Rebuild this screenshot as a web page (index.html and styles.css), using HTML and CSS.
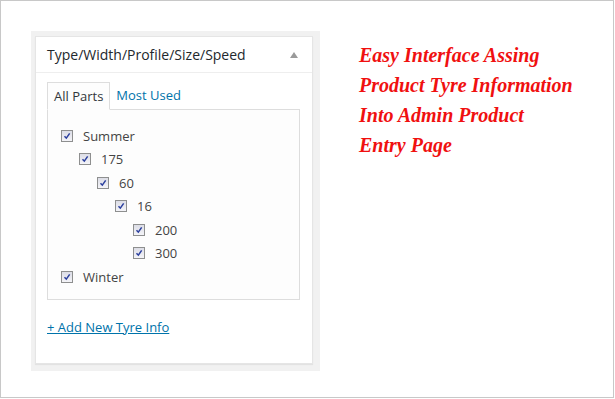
FILE: index.html
```html
<!DOCTYPE html>
<html>
<head>
<meta charset="utf-8">
<link rel="stylesheet" href="styles.css">
</head>
<body>
<div class="frame">
  <div class="well">
    <div class="postbox">
      <div class="hndle">
        <span class="title">Type/Width/Profile/Size/Speed</span>
        <span class="toggle"></span>
      </div>
      <div class="inside">
        <ul class="tabs">
          <li class="tab active">All Parts</li>
          <li class="tab">Most Used</li>
        </ul>
        <div class="panel">
          <ul class="tree">
            <li class="item l0"><span class="cb"><svg viewBox="0 0 12 12" width="12" height="12"><path d="M3 6.2 L5.2 8.6 L9.2 2.8" fill="none" stroke="#2b3f9e" stroke-width="1.8"/></svg></span>Summer</li>
            <li class="item l1"><span class="cb"><svg viewBox="0 0 12 12" width="12" height="12"><path d="M3 6.2 L5.2 8.6 L9.2 2.8" fill="none" stroke="#2b3f9e" stroke-width="1.8"/></svg></span>175</li>
            <li class="item l2"><span class="cb"><svg viewBox="0 0 12 12" width="12" height="12"><path d="M3 6.2 L5.2 8.6 L9.2 2.8" fill="none" stroke="#2b3f9e" stroke-width="1.8"/></svg></span>60</li>
            <li class="item l3"><span class="cb"><svg viewBox="0 0 12 12" width="12" height="12"><path d="M3 6.2 L5.2 8.6 L9.2 2.8" fill="none" stroke="#2b3f9e" stroke-width="1.8"/></svg></span>16</li>
            <li class="item l4"><span class="cb"><svg viewBox="0 0 12 12" width="12" height="12"><path d="M3 6.2 L5.2 8.6 L9.2 2.8" fill="none" stroke="#2b3f9e" stroke-width="1.8"/></svg></span>200</li>
            <li class="item l4"><span class="cb"><svg viewBox="0 0 12 12" width="12" height="12"><path d="M3 6.2 L5.2 8.6 L9.2 2.8" fill="none" stroke="#2b3f9e" stroke-width="1.8"/></svg></span>300</li>
            <li class="item l0"><span class="cb"><svg viewBox="0 0 12 12" width="12" height="12"><path d="M3 6.2 L5.2 8.6 L9.2 2.8" fill="none" stroke="#2b3f9e" stroke-width="1.8"/></svg></span>Winter</li>
          </ul>
        </div>
        <a class="add" href="#">+ Add New Tyre Info</a>
      </div>
    </div>
  </div>
  <div class="note">
    <p>Easy Interface Assing</p>
    <p>Product Tyre Information</p>
    <p>Into Admin Product</p>
    <p>Entry Page</p>
  </div>
</div>
</body>
</html>
```
FILE: styles.css
```css
html, body { margin: 0; padding: 0; background: #fff; }
body { width: 615px; height: 399px; overflow: hidden; }
.frame {
  box-sizing: border-box;
  width: 614px;
  height: 398px;
  border: 1px solid #c8c8c8;
  display: flex;
  align-items: flex-start;
  padding: 30px 0 0 30px;
  font-family: "Open Sans", sans-serif;
}
.well {
  background: #f1f1f1;
  padding: 5px 7px 7px 4px;
  width: 278px;
}
.postbox {
  background: #fff;
  border: 1px solid #e5e5e5;
  box-shadow: 0 1px 1px rgba(0,0,0,0.06);
  height: 328px;
  box-sizing: border-box;
}
.hndle {
  height: 36px;
  box-sizing: border-box;
  border-bottom: 1px solid #eee;
  display: flex;
  align-items: center;
  justify-content: space-between;
  padding: 0 14px 0 11px;
}
.title {
  font-size: 14px;
  color: #23282d;
  line-height: 20px;
}
.toggle {
  width: 0; height: 0;
  border-left: 4px solid transparent;
  border-right: 4px solid transparent;
  border-bottom: 6px solid #9a9a9a;
}
.inside { padding: 9px 12px 0 11px; }
.tabs {
  list-style: none;
  margin: 0;
  padding: 0;
  display: flex;
  height: 27px;
}
.tab {
  font-size: 13px;
  color: #0073aa;
  line-height: 26px;
  box-sizing: border-box;
  height: 27px;
  white-space: nowrap;
  padding: 0 6px 0 6px;
}
.tab.active {
  color: #32373c;
  border: 1px solid #ddd;
  border-bottom: 1px solid #fdfdfd;
  background: #fdfdfd;
  padding: 0 6px;
  position: relative;
  height: 28px;
}
.panel {
  background: #fdfdfd;
  border: 1px solid #ddd;
  height: 191px;
  box-sizing: border-box;
  padding: 14px 0 0 13px;
}
.tree { list-style: none; margin: 0; padding: 0; }
.item {
  display: flex;
  align-items: center;
  height: 23.5px;
  font-size: 13px;
  color: #444;
}
.cb {
  width: 12px;
  height: 12px;
  box-sizing: border-box;
  border: 1px solid #8e8f8f;
  background: linear-gradient(#dcdde6, #f4f4f8);
  margin-right: 10px;
  display: flex;
  align-items: center;
  justify-content: center;
}
.cb svg { display: block; width: 10px; height: 10px; }
.l1 { padding-left: 18px; }
.l2 { padding-left: 36px; }
.l3 { padding-left: 54px; }
.l4 { padding-left: 72px; }
.add {
  display: inline-block;
  margin-top: 18px;
  font-size: 13px;
  color: #0073aa;
  text-decoration: underline;
}
.note {
  margin-left: 39px;
  padding-top: 9px;
  font-family: "Liberation Serif", serif;
  font-weight: bold;
  font-style: italic;
  font-size: 20px;
  color: #f01010;
}
.note p { margin: 0; line-height: 30px; }
```
